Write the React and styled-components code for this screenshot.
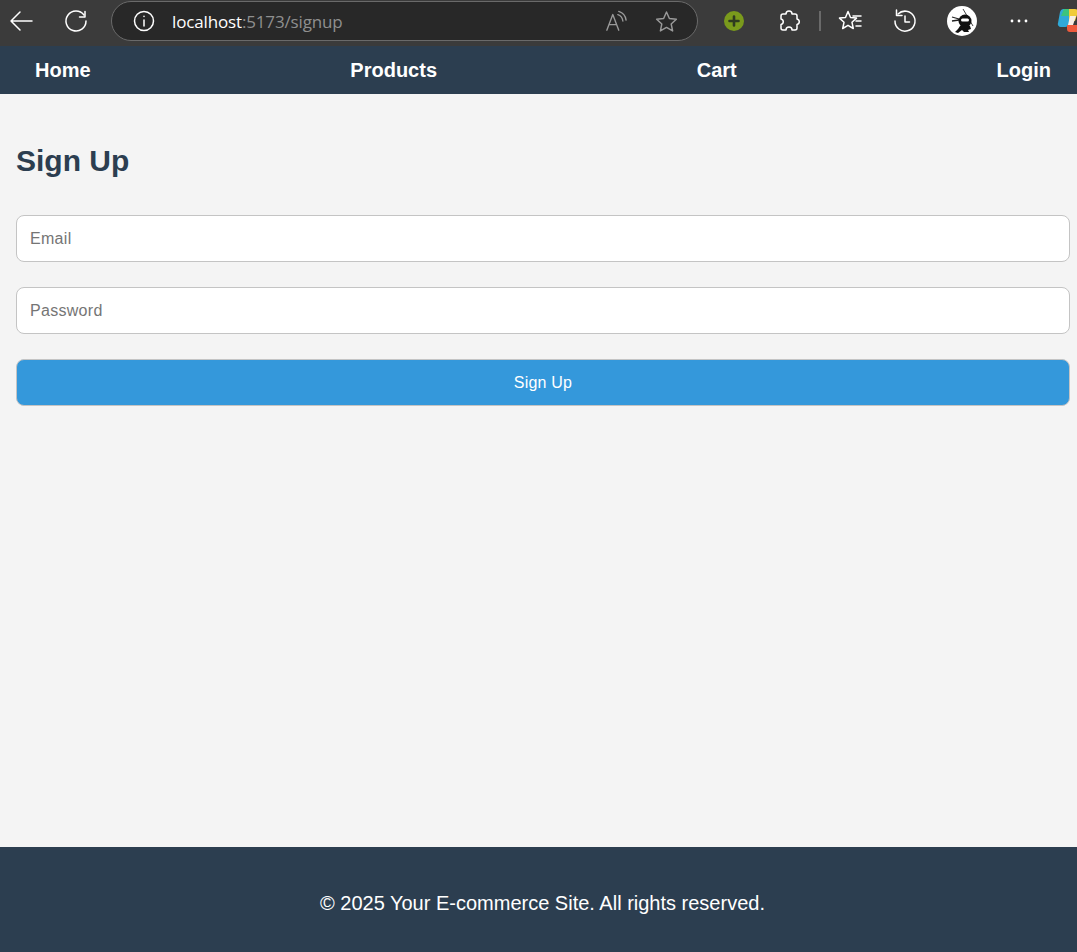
import React from "react";
import styled, { createGlobalStyle } from "styled-components";

const GlobalStyle = createGlobalStyle`
  html, body {
    margin: 0;
    padding: 0;
    background: #f4f4f4;
    font-family: "Liberation Sans", Arial, sans-serif;
    overflow: hidden;
  }
`;

const Page = styled.div`
  width: 1077px;
  height: 952px;
  display: flex;
  flex-direction: column;
  overflow: hidden;
`;

/* browser toolbar */
const Toolbar = styled.div`
  height: 46px;
  flex: none;
  display: flex;
  align-items: flex-start;
  background: #3b3b3b;
  overflow: hidden;
`;

const Slot = styled.div`
  flex: none;
  width: ${(p) => p.$w}px;
  height: 42px;
  margin-left: ${(p) => p.$ml || 0}px;
  display: flex;
  align-items: center;
  justify-content: center;
`;

const AddressBar = styled.div`
  flex: none;
  box-sizing: border-box;
  width: 587px;
  height: 40px;
  margin: 1px 0 0 14px;
  display: flex;
  align-items: center;
  padding: 0 19px 0 20px;
  background: #282828;
  border: 1.5px solid #6a6a6a;
  border-radius: 20px;
`;

const Url = styled.div`
  flex: 1;
  margin-left: 16px;
  font-family: "Open Sans", sans-serif;
  font-size: 17px;
  letter-spacing: -0.15px;
  color: #ffffff;
`;

const UrlRest = styled.span`
  color: #8f8f8f;
`;

const AddressIcons = styled.div`
  display: flex;
  align-items: center;
  gap: 28px;
`;

const Divider = styled.div`
  width: 1.5px;
  height: 20px;
  background: #6a6a6a;
`;

/* site nav */
const Nav = styled.nav`
  height: 48px;
  flex: none;
  box-sizing: border-box;
  padding: 0 26px 0 35px;
  display: flex;
  align-items: center;
  justify-content: space-between;
  background: #2c3e50;
`;

const NavLink = styled.a`
  font-size: 20px;
  font-weight: 700;
  color: #ffffff;
  text-decoration: none;
`;

const Main = styled.main`
  flex: 1;
  padding: 50px 7px 0 16px;
  background: #f4f4f4;
`;

const Title = styled.h2`
  margin: 0 0 37px;
  font-size: 30px;
  line-height: 34px;
  font-weight: 700;
  color: #2c3e50;
`;

const Form = styled.form`
  display: flex;
  flex-direction: column;
  gap: 25px;
`;

const Input = styled.input`
  box-sizing: border-box;
  width: 100%;
  height: 47px;
  padding: 0 13px;
  font-family: "Liberation Sans", Arial, sans-serif;
  font-size: 16px;
  color: #333333;
  background: #ffffff;
  border: 1px solid #c4c4c4;
  border-radius: 8px;
  outline: none;

  &::placeholder {
    color: #757575;
    opacity: 1;
    letter-spacing: 0.3px;
  }
`;

const SubmitButton = styled.button`
  box-sizing: border-box;
  width: 100%;
  height: 47px;
  font-family: "Liberation Sans", Arial, sans-serif;
  font-size: 16px;
  letter-spacing: 0.2px;
  color: #ffffff;
  background: #3498db;
  border: 1px solid #c4c4c4;
  border-radius: 8px;
`;

const Footer = styled.footer`
  height: 105px;
  flex: none;
  box-sizing: border-box;
  padding: 45px 0 0 8px;
  background: #2c3e50;
  color: #ffffff;
  font-size: 20px;
  line-height: 23px;
  text-align: center;
`;

const Stroke = ({ size = 24, color = "#ffffff", width = 1.5, children }) => (
  <svg
    width={size}
    height={size}
    viewBox="0 0 24 24"
    fill="none"
    stroke={color}
    strokeWidth={width}
    strokeLinecap="round"
    strokeLinejoin="round"
  >
    {children}
  </svg>
);

const BackIcon = () => (
  <Stroke>
    <path d="M23 12H2M11 3l-9 9 9 9" />
  </Stroke>
);

const ReloadIcon = () => (
  <Stroke>
    <path d="M20 6A10 10 0 1 0 22 12" />
    <path d="M21 2.500V8h-5.500" />
  </Stroke>
);

const InfoIcon = () => (
  <Stroke>
    <circle cx="12" cy="12" r="9.500" />
    <path d="M12 11v6M12 7.200v.3" />
  </Stroke>
);

const ReadAloudIcon = () => (
  <Stroke size={22} color="#9a9a9a">
    <path d="M2 22L8.500 5l6.500 17M4.500 16h8" />
    <path d="M14 5c3 1 5 3.500 5.500 7M15 1.500c4.500 1.500 7.500 5 8 9.500" />
  </Stroke>
);

const StarIcon = ({ color = "#9a9a9a" }) => (
  <Stroke size={23} color={color}>
    <path d="M12 2l3 6.800 7.300.8-5.400 5 1.500 7.300L12 18.200l-6.400 3.700 1.500-7.300-5.400-5 7.300-.8z" />
  </Stroke>
);

const PlusBadge = () => (
  <svg width="20" height="20" viewBox="0 0 20 20">
    <circle cx="10" cy="10" r="10" fill="#7a9a1c" />
    <path d="M10 5.500v9M5.500 10h9" stroke="#2f3a20" strokeWidth="2.600" strokeLinecap="round" />
  </svg>
);

const PuzzleIcon = () => (
  <Stroke>
    <path d="M9 5a3 3 0 0 1 6 0h3a2 2 0 0 1 2 2v3a2.800 2.800 0 0 1 0 5.500V19a2 2 0 0 1-2 2h-3a3 3 0 0 0-6 0H6a2 2 0 0 1-2-2v-3.500a2.800 2.800 0 0 0 0-5.500V7a2 2 0 0 1 2-2z" />
  </Stroke>
);

const FavoritesIcon = () => (
  <Stroke>
    <path d="M10 2.500l2.500 6 6 .6-4.500 4.200 1.300 6.200-5.300-3.200-5.300 3.200 1.300-6.200L1.500 9.100l6-.6z" />
    <path d="M15 7h8M18 12h5M18 17h5" />
  </Stroke>
);

const HistoryIcon = () => (
  <Stroke>
    <path d="M5 5A10 10 0 1 1 2 12" />
    <path d="M3.500 1v5.500H9M12 7v6h4.500" />
  </Stroke>
);

const NinjaAvatar = () => (
  <svg width="30" height="30" viewBox="0 0 30 30">
    <circle cx="15" cy="15" r="15" fill="#ffffff" />
    <path d="M16 3l10 17" stroke="#444444" strokeWidth="1" />
    <path d="M5 11l7 2M5 15l7-1" stroke="#222222" strokeWidth="1.300" />
    <circle cx="18" cy="15" r="6.500" fill="#111111" />
    <rect x="14" y="12.500" width="8" height="3" rx="1.500" fill="#ffffff" />
    <path d="M13 20h10l1 3-3 1 1 2h-5l-2-2-4 3-3-1 3-3z" fill="#111111" />
  </svg>
);

const MoreDots = () => (
  <svg width="18" height="4" viewBox="0 0 18 4">
    <circle cx="2" cy="2" r="1.400" fill="#ffffff" />
    <circle cx="9" cy="2" r="1.400" fill="#ffffff" />
    <circle cx="16" cy="2" r="1.400" fill="#ffffff" />
  </svg>
);

const CopilotIcon = () => (
  <svg width="26" height="26" viewBox="0 0 26 26">
    <path d="M6 1h10l-4 15a4 4 0 0 1-4 3H4a3 3 0 0 1-3-4l2-11a4 4 0 0 1 3-3z" fill="#2fa9d8" />
    <path d="M7 1h8l-2 7H4z" fill="#3cc47c" />
    <path d="M12 1h6a3 3 0 0 1 3 3l-3 9h-6z" fill="#f0cb3a" />
    <path d="M10 17h10l5-8v9a6 6 0 0 1-6 6h-6a3 3 0 0 1-3-3z" fill="#ee5a3c" />
    <path d="M13 8h6l-3 9h-5z" fill="#f6eee6" />
  </svg>
);

export default function App() {
  return (
    <Page>
      <GlobalStyle />
      <Toolbar>
        <Slot $w={42}><BackIcon /></Slot>
        <Slot $w={42} $ml={13}><ReloadIcon /></Slot>
        <AddressBar>
          <InfoIcon />
          <Url>
            localhost<UrlRest>:5173/signup</UrlRest>
          </Url>
          <AddressIcons>
            <ReadAloudIcon />
            <StarIcon />
          </AddressIcons>
        </AddressBar>
        <Slot $w={72}><PlusBadge /></Slot>
        <Slot $w={38}><PuzzleIcon /></Slot>
        <Slot $w={24}><Divider /></Slot>
        <Slot $w={36}><FavoritesIcon /></Slot>
        <Slot $w={74}><HistoryIcon /></Slot>
        <Slot $w={40}><NinjaAvatar /></Slot>
        <Slot $w={74}><MoreDots /></Slot>
        <Slot $w={26} $ml={1}><CopilotIcon /></Slot>
      </Toolbar>
      <Nav>
        <NavLink href="#">Home</NavLink>
        <NavLink href="#">Products</NavLink>
        <NavLink href="#">Cart</NavLink>
        <NavLink href="#">Login</NavLink>
      </Nav>
      <Main>
        <Title>Sign Up</Title>
        <Form onSubmit={(e) => e.preventDefault()}>
          <Input type="email" placeholder="Email" />
          <Input type="password" placeholder="Password" />
          <SubmitButton type="submit">Sign Up</SubmitButton>
        </Form>
      </Main>
      <Footer>© 2025 Your E-commerce Site. All rights reserved.</Footer>
    </Page>
  );
}
